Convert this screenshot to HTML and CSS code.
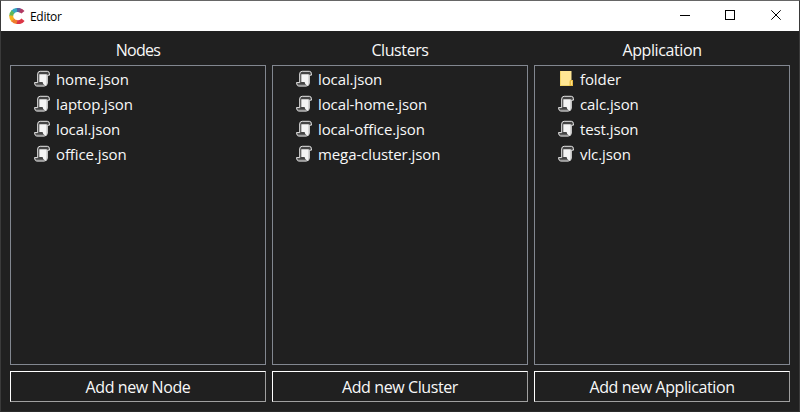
FILE: index.html
```
<!DOCTYPE html>
<html lang="en">
<head>
<meta charset="utf-8">
<title>Editor</title>
<link rel="stylesheet" href="styles.css">
</head>
<body>
<svg width="0" height="0" class="defs">
  <symbol id="scroll" viewBox="0 0 18 18">
    <path d="M4.7 12V4Q4.7 1.3 7.2 1.3H14.3Q16.4 1.3 16.4 3.8V5.2H14.3V13Q14.3 16 11.3 16H4.2Q1.5 16 1.5 12.6H4.7Z" fill="#444" stroke="#e8e8e8" stroke-width="1"/>
    <path d="M6.3 4.2H13.8V13.5Q13.3 15.5 11.8 15.5Q10 15 9.6 12H6.3Z" fill="#f4f4f4"/>
    <path d="M2.8 15.6H11.2" stroke="#a0a0a0" stroke-width="1.8"/>
  </symbol>
  <symbol id="folder" viewBox="0 0 18 18">
    <path d="M3 1H14.5V10H16V16H3Z" fill="#ffe694"/>
    <path d="M3 1H4V16H3ZM4 15H14V16H4Z" fill="#f3d56a"/>
    <path d="M13 10H16V16H12.5V12Z" fill="#e8bd45"/>
    <path d="M14 11H15V15H14Z" fill="#ffe08a"/>
  </symbol>
</svg>
<div class="window">
  <header class="titlebar">
    <svg class="logo" width="16" height="16" viewBox="0 0 16 16" fill="none" stroke-width="4">
      <path d="M14 4.3A6 6 0 0 0 10 2.2" stroke="#b03a62"/>
      <path d="M11 2.3A6 6 0 0 0 7 2.2" stroke="#5b5fa0"/>
      <path d="M8 2A6 6 0 0 0 3.5 4.3" stroke="#35aac3"/>
      <path d="M4 3.7A6 6 0 0 0 2.2 8" stroke="#5fb85a"/>
      <path d="M2.2 7.5A6 6 0 0 0 4 12.3" stroke="#f3b51e"/>
      <path d="M3.7 12A6 6 0 0 0 8.5 14" stroke="#ef7c2c"/>
      <path d="M8 14A6 6 0 0 0 14 11.7" stroke="#dc3545"/>
    </svg>
    <span class="title">Editor</span>
    <svg class="controls" width="138" height="30" viewBox="0 0 138 30" fill="none" stroke="#000" shape-rendering="crispEdges">
      <path d="M19 14.5H29M64.5 9.5H73.5V18.5H64.5Z"/>
      <path d="M110.3 9.3L119.7 18.7M119.7 9.3L110.3 18.7" shape-rendering="auto"/>
    </svg>
  </header>
  <main class="columns">
    <section class="column">
      <h2 class="heading"><span class="nodes">Nodes</span></h2>
      <ul class="files">
        <li><svg><use href="#scroll"/></svg><span>home.json</span></li>
        <li><svg><use href="#scroll"/></svg><span>laptop.json</span></li>
        <li><svg><use href="#scroll"/></svg><span>local.json</span></li>
        <li><svg><use href="#scroll"/></svg><span>office.json</span></li>
      </ul>
      <button class="add">Add new Node</button>
    </section>
    <section class="column">
      <h2 class="heading">Clusters</h2>
      <ul class="files">
        <li><svg><use href="#scroll"/></svg><span>local.json</span></li>
        <li><svg><use href="#scroll"/></svg><span>local-home.json</span></li>
        <li><svg><use href="#scroll"/></svg><span>local-office.json</span></li>
        <li><svg><use href="#scroll"/></svg><span>mega-cluster.json</span></li>
      </ul>
      <button class="add">Add new Cluster</button>
    </section>
    <section class="column">
      <h2 class="heading">Application</h2>
      <ul class="files">
        <li><svg><use href="#folder"/></svg><span>folder</span></li>
        <li><svg><use href="#scroll"/></svg><span>calc.json</span></li>
        <li><svg><use href="#scroll"/></svg><span>test.json</span></li>
        <li><svg><use href="#scroll"/></svg><span>vlc.json</span></li>
      </ul>
      <button class="add">Add new Application</button>
    </section>
  </main>
</div>
</body>
</html>
```
FILE: styles.css
```
* { box-sizing: border-box; }
body { margin: 0; background: #202020; color: #f8f8f8; font-family: "Open Sans", "Noto Sans", sans-serif; overflow: hidden; }
.defs { position: absolute; }
.window { width: 800px; height: 412px; border: 1px solid #3a3a3a; border-top-color: #666; border-bottom-color: #2b2b2b; display: flex; flex-direction: column; }
.titlebar { height: 30px; flex: none; background: #fff; color: #000; display: flex; align-items: center; padding-left: 8px; }
.title { font-size: 12px; margin-left: 5px; letter-spacing: -0.3px; }
.controls { margin-left: auto; }
.columns { display: grid; grid-template-columns: repeat(3, 256px); gap: 6px; padding: 0 9px; }
.column { display: flex; flex-direction: column; }
.heading { height: 34px; margin: 0; padding-top: 3px; font-size: 16px; font-weight: 400; line-height: 32px; text-align: center; letter-spacing: -0.4px; }
.nodes { letter-spacing: -0.7px; }
.files { height: 300px; margin: 0 0 6px; padding: 0 0 0 22px; border: 1px solid #828790; list-style: none; }
.files li { height: 25px; display: flex; align-items: center; font-size: 15px; letter-spacing: -0.1px; }
.files svg { width: 18px; height: 18px; margin-right: 5px; }
.add { height: 31px; padding: 2px 0 0; border: 1px solid; border-color: #fff #a0a0a0 #a0a0a0 #fff; background: #202020; color: inherit; font: 16px/27px "Open Sans", "Noto Sans", sans-serif; letter-spacing: -0.4px; }
```
